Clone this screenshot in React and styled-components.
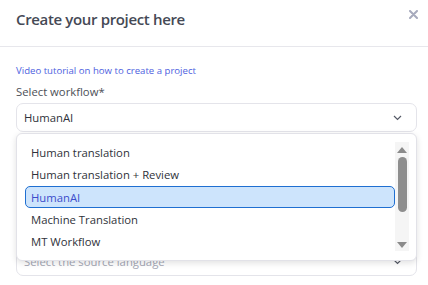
import React from 'react';
import styled, { createGlobalStyle } from 'styled-components';

const workflows = [
    'Human translation',
    'Human translation + Review',
    'HumanAI',
    'Machine Translation',
    'MT Workflow',
];

function Chevron() {
    return (
        <svg width="9" height="6" viewBox="0 0 9 6">
            <path d="M1 1 L4.5 4.5 L8 1" fill="none" stroke="#555a66" strokeWidth="1.2" />
        </svg>
    );
}

function App() {
    const selected = 'HumanAI';

    return (
        <>
            <GlobalStyle />
            <Modal>
                <Header>
                    <Title>Create your project here</Title>
                    <CloseButton aria-label="close">
                        <svg width="9" height="9" viewBox="0 0 9 9">
                            <path d="M1 1 L8 8 M8 1 L1 8" stroke="#a7aabd" strokeWidth="2" strokeLinecap="round" />
                        </svg>
                    </CloseButton>
                </Header>

                <Body>
                    <TutorialLink href="#">Video tutorial on how to create a project</TutorialLink>

                    <Field>
                        <Label>Select workflow*</Label>
                        <SelectWrap>
                            <Select>
                                <span>{selected}</span>
                                <Chevron />
                            </Select>

                            <Dropdown>
                                <OptionList>
                                    {workflows.map((w) => (
                                        <Option key={w} $active={w === selected}>{w}</Option>
                                    ))}
                                </OptionList>
                                <Scrollbar>
                                    <Arrow $up />
                                    <Thumb />
                                    <Spacer />
                                    <Arrow />
                                </Scrollbar>
                            </Dropdown>
                        </SelectWrap>
                    </Field>

                    {/* source language field, mostly covered by the open dropdown */}
                    <Field $offset>
                        <Select>
                            <Placeholder>Select the source language</Placeholder>
                            <Chevron />
                        </Select>
                    </Field>
                </Body>
            </Modal>
        </>
    );
}

const GlobalStyle = createGlobalStyle`
    body {
        margin: 0;
        background: #ffffff;
        font-family: "Open Sans", "Noto Sans", sans-serif;
    }
`

const Modal = styled.div`
    width: 428px;
    height: 285px;
    overflow: hidden;
    background: #ffffff;
    display: flex;
    flex-direction: column;
`

const Header = styled.div`
    height: 47px;
    box-sizing: border-box;
    border-bottom: 1px solid #e7e7ec;
    display: flex;
    justify-content: space-between;
    align-items: flex-start;
    padding: 7px 10px 0 16px;
`

const Title = styled.h1`
    margin: 0;
    font-size: 15px;
    line-height: 24px;
    letter-spacing: -0.35px;
    font-weight: 600;
    color: #454955;
`

const CloseButton = styled.button`
    border: none;
    background: none;
    padding: 0;
    margin-top: 3px;
    width: 9px;
    height: 9px;
    display: flex;
    cursor: pointer;
`

const Body = styled.div`
    padding: 17px 11px 0 16px;
    display: flex;
    flex-direction: column;
`

const TutorialLink = styled.a`
    font-size: 9.6px;
    line-height: 14px;
    color: #4e5fe0;
    text-decoration: none;
    margin-bottom: 6px;
`

const Field = styled.div`
    display: flex;
    flex-direction: column;
    gap: 3px;
    margin-top: ${(p) => (p.$offset ? '115px' : '0')};
`

const Label = styled.label`
    font-size: 11.3px;
    line-height: 16px;
    color: #4c4f57;
`

const SelectWrap = styled.div`
    position: relative;
`

const Select = styled.div`
    height: 29px;
    box-sizing: border-box;
    border: 1px solid #e4e4ea;
    border-radius: 7px;
    padding: 0 14px 0 7px;
    display: flex;
    align-items: center;
    justify-content: space-between;
    font-size: 11.3px;
    color: #2f323a;
    background: #ffffff;
`

const Placeholder = styled.span`
    color: #a3a6b4;
`

const Dropdown = styled.div`
    position: absolute;
    z-index: 2;
    top: 30px;
    left: 0;
    width: 100%;
    height: 128px;
    box-sizing: border-box;
    background: #ffffff;
    border: 1px solid #e2e2e8;
    border-radius: 6px;
    box-shadow: 0 2px 6px rgba(0, 0, 0, 0.12);
    padding: 7px 7px 7px 8px;
    display: flex;
`

const OptionList = styled.div`
    flex: 1;
    display: flex;
    flex-direction: column;
`

const Option = styled.div`
    height: 22.5px;
    box-sizing: border-box;
    padding: 0 5px;
    display: flex;
    align-items: center;
    font-size: 11.3px;
    color: ${(p) => (p.$active ? '#3c4ccb' : '#2f323a')};
    background: ${(p) => (p.$active ? '#cde4fc' : 'transparent')};
    border: 1px solid ${(p) => (p.$active ? '#1f6fd1' : 'transparent')};
    border-radius: 5px;
`

const Scrollbar = styled.div`
    width: 14px;
    margin: 1px 0 2px;
    background: #f5f5f5;
    display: flex;
    flex-direction: column;
    align-items: center;
    padding: 5px 0 3px;
    box-sizing: border-box;
`

const Arrow = styled.div`
    width: 0;
    height: 0;
    border-left: 5px solid transparent;
    border-right: 5px solid transparent;
    ${(p) => (p.$up ? 'border-bottom: 6px solid #8b8b8b;' : 'border-top: 6px solid #8b8b8b;')}
`

const Thumb = styled.div`
    width: 9px;
    height: 55px;
    margin-top: 4px;
    border-radius: 5px;
    background: #8e8e8e;
`

const Spacer = styled.div`
    flex: 1;
`

export default App
